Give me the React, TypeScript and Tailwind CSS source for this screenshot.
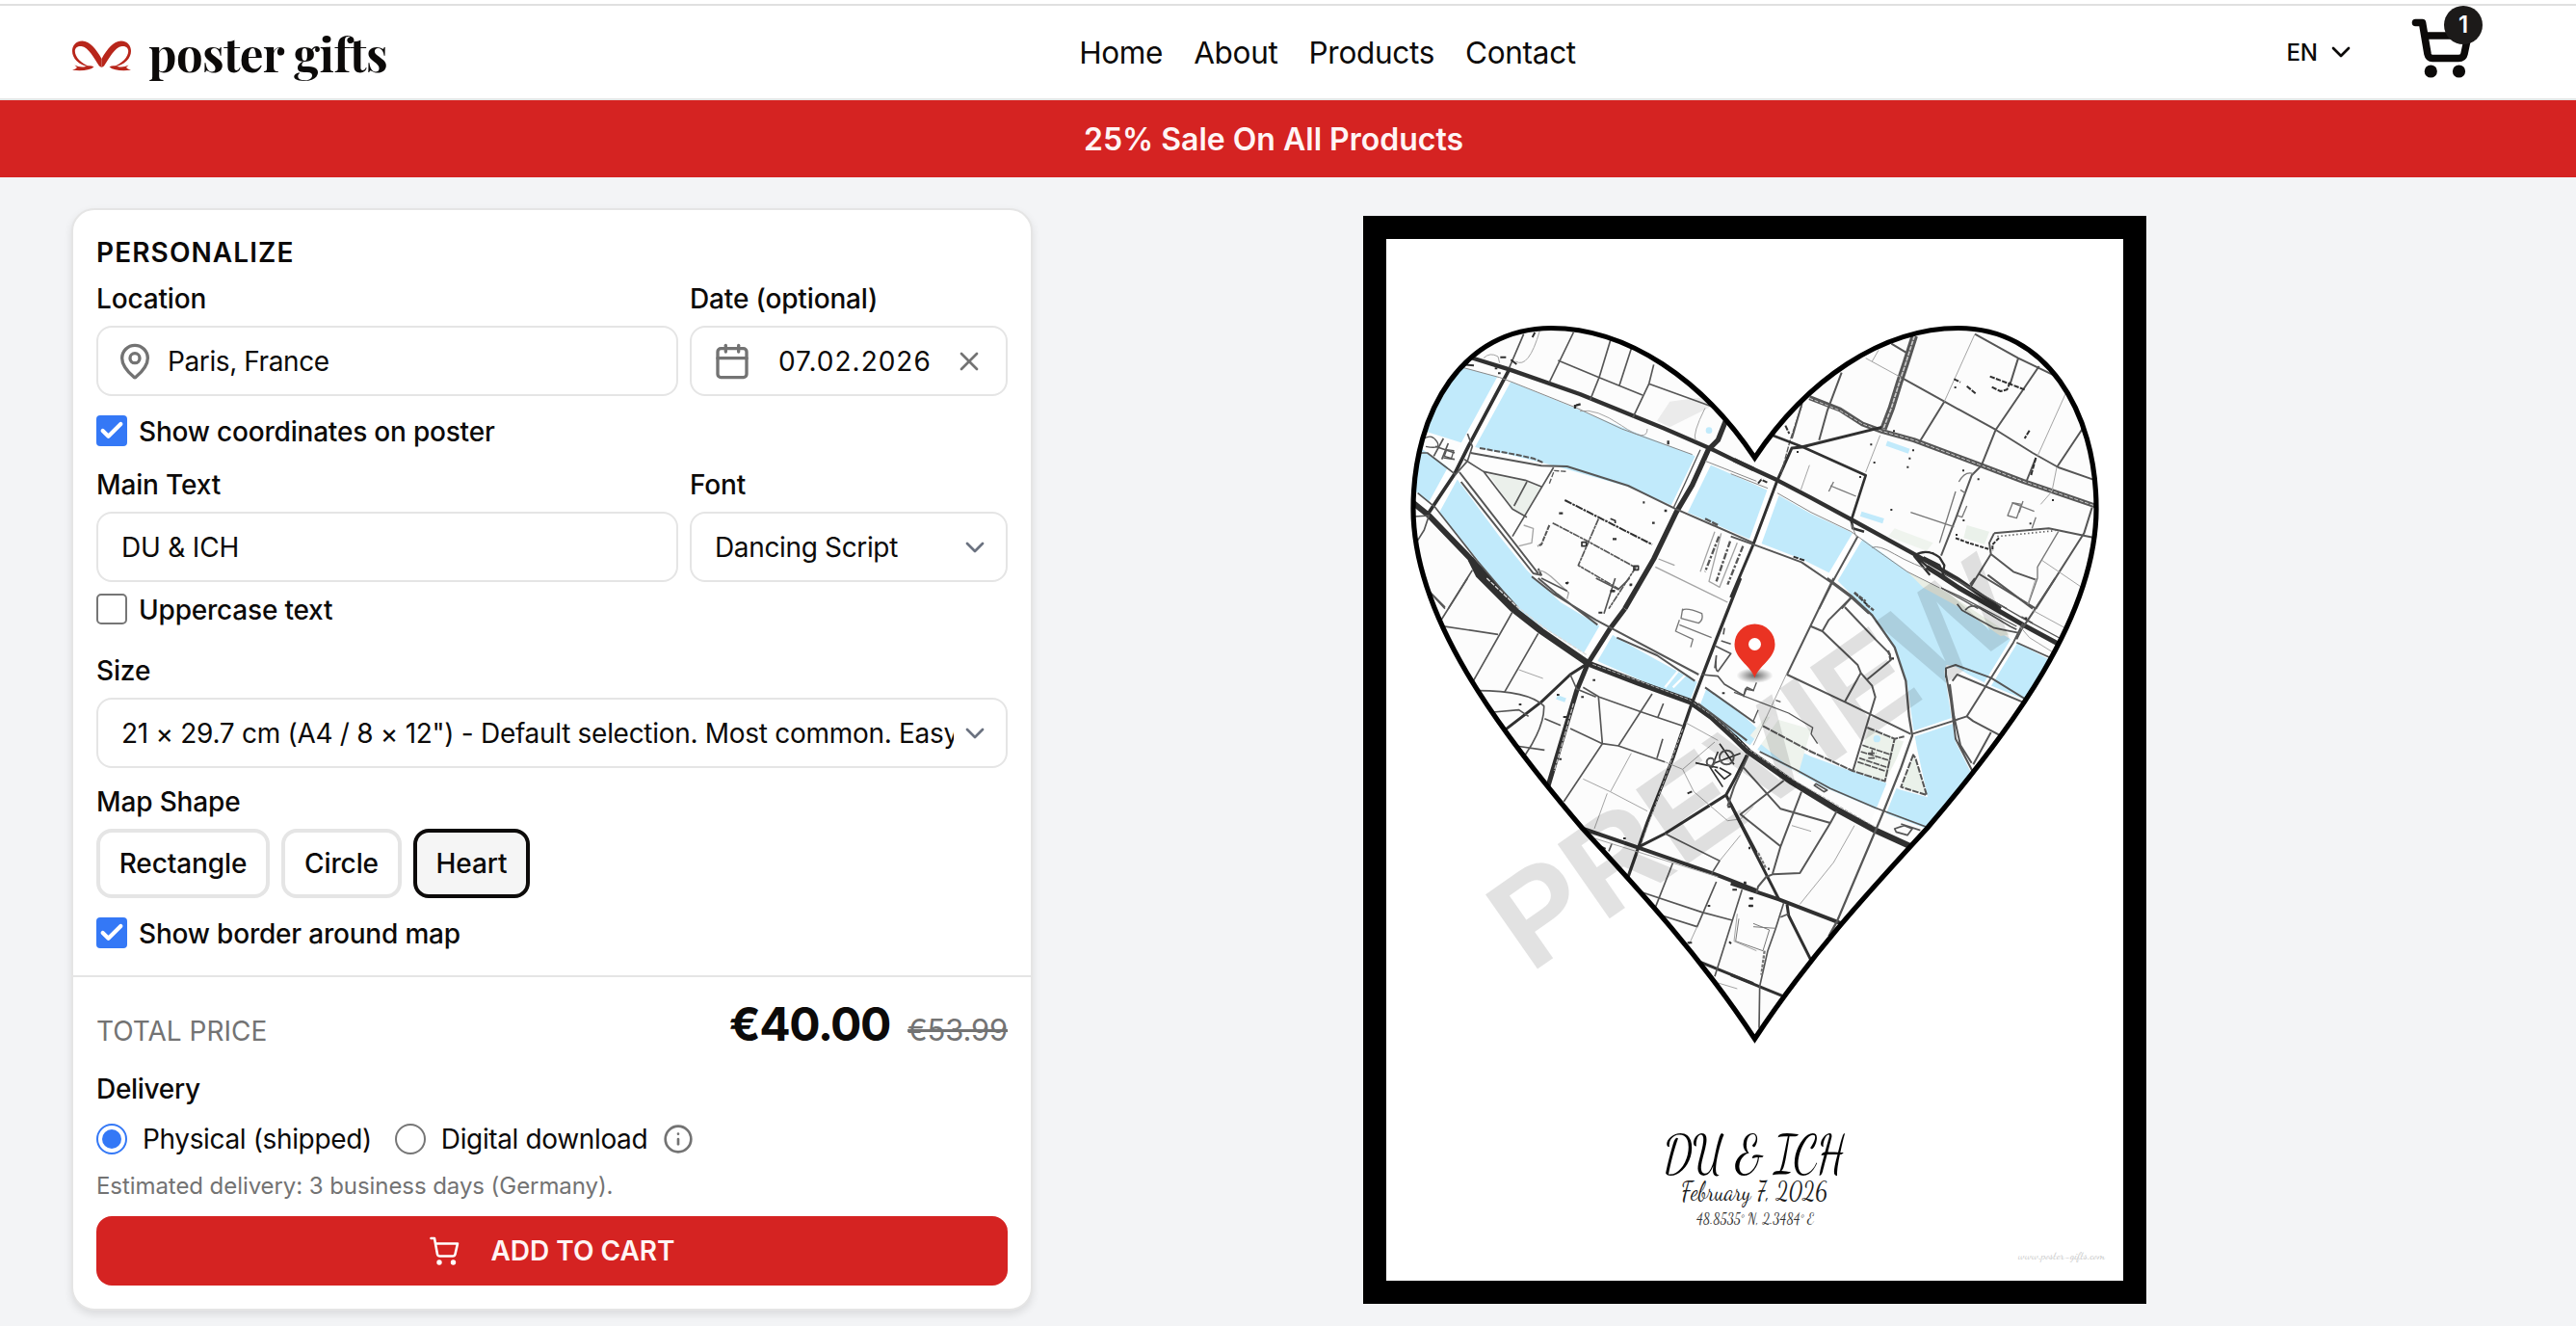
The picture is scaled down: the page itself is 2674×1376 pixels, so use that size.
import React from "react";
import { Calendar, Check, ChevronDown, Info, MapPin, X } from "lucide-react";

const HEART =
  "M1821.5 475 C1768 395 1690 340.5 1610 340.5 C1520 340.5 1467 425 1467 528 C1467 640 1556 758 1643 860 C1700 922 1765 992 1821.5 1078 C1878 992 1943 922 2000 860 C2087 758 2176 640 2176 528 C2176 425 2123 340.5 2033 340.5 C1953 340.5 1875 395 1821.5 475 Z";

type Road = [d: string, width: number, color?: string, dash?: string];

const DARK = "#303030";
const MID = "#565656";
const THIN = "#a4a4a4";

const WATER =
  "340,510 470,545 510,560 850,700 1070,785 1110,810 1335,910 1440,970 1550,1020 1590,1040 1660,1090 1740,1150 1840,1210 1900,1255 2000,1320 2060,1360 2185,1425 2240,1460 2105,1548 1990,1500 1930,1470 1890,1445 1862,1440 1855,1460 1875,1590 1890,1680 1940,1780 1960,1800 1800,1950 1680,1905 1490,1825 1350,1750 1200,1660 1090,1570 1050,1550 780,1430 720,1395 600,1320 510,1260 430,1170 400,1110 270,950 190,885 190,500";
const ISLAND =
  "190,690 245,715 350,748 405,765 500,785 600,810 640,820 870,885 1010,945 1055,965 1240,1045 1410,1110 1500,1155 1550,1205 1630,1290 1700,1390 1740,1500 1757,1630 1770,1700 1803,1852 1715,1828 1670,1806 1570,1772 1440,1725 1290,1655 1200,1570 1110,1510 1080,1490 960,1425 835,1355 775,1315 660,1245 580,1170 555,1145 470,1040 340,865 310,825 225,765 190,740";

const BRIDGES: Road[] = [
  ["M495 530L260 960", 44],
  ["M1115 780L1025 965", 56],
  ["M1330 880L1260 1075", 40],
  ["M1590 1030L1495 1190", 36],
  ["M815 1310L745 1430", 50],
  ["M1105 1490L1070 1580", 34],
  ["M985 1510L1025 1460M1010 1510L1050 1470", 7],
  ["M1330 1600L1245 1720", 26],
  ["M1750 1670L1640 1940", 34],
  ["M1755 1656L1885 1612", 18],
  ["M2100 1320L1990 1500", 24],
];

const NORTH_WEST: Road[] = [
  ["M380 483L500 520L720 597L980 703L1130 768L1200 802L1260 830", 13, DARK],
  ["M500 520L375 755L330 845L250 965", 11, DARK],
  ["M200 935L250 975L380 1110L520 1265", 18, DARK],
  ["M1180 665L1150 740L1120 770L1070 880L1020 965L950 1110L860 1265", 16, DARK],
  ["M1095 770L1045 880L1012 950", 4, MID],
  ["M545 410L500 515M700 405L625 560M652 492L780 545L915 600M815 430L780 545L752 615M880 455L843 570M950 505L935 565L885 670M935 565L1130 635", 5, MID],
  ["M595 400Q560 520 520 495M1110 640Q1070 720 1080 740M720 650Q770 640 850 695T930 705M420 485Q440 465 465 480L470 500", 3, THIN],
  ["M340 510L470 545L510 560L710 640L850 705L1070 785", 3, "#888"],
  ["M1110 805L1270 868", 3, "#888"],
  ["M380 780L600 820L680 822L870 882L1020 955L1260 1060", 6, MID],
  ["M408 765L520 785L575 797L605 810", 6, MID, "18 5"],
  ["M360 800L420 838L550 865L600 885M420 838L510 955L555 980M638 825L510 1040M555 870L515 945", 5, MID],
  ["M625 875L640 835L680 838", 4, MID, "16 5"],
  ["M345 840L590 1155M350 870L575 1155L600 1160L590 1140", 6, MID],
  ["M215 905L270 950L400 1115L480 1210L530 1265", 5, MID],
  ["M215 780L245 780L330 845M265 790L295 735M290 800L310 750M270 760L330 780M295 795L330 800", 5, MID],
  ["M235 735Q260 720 275 745T240 760M305 770L327 773L320 797L298 790Z", 4, MID],
  ["M370 720L385 760L370 805L330 850", 5, MID],
  ["M673 927L945 1065", 6, DARK, "24 3 8 3"],
  ["M635 998L735 1050L890 1135M778 985L715 1130L840 1203M895 1135L810 1265", 5, MID, "22 2 10 2"],
  ["M625 1005L600 1065L588 1070", 6, MID, "16 3"],
  ["M726 1058h14v12h-14zM888 1132h14v12h-14zM815 985l15 6v8", 5, DARK],
  ["M655 968h12M822 1048h12M815 1210h14M678 1188l6-6M875 1190h8M945 998h8M916 934h6M983 960h8M995 742v12M708 632l14-4M705 630v12", 7, DARK],
  ["M545 1005L575 1015L570 1060L530 1070M590 1150Q600 1140 630 1165L685 1215L680 1235", 4, THIN],
  ["M965 1110L1015 1130M955 1135L1180 1245M1140 1025L1095 1150M1160 1030L1122 1180L1155 1198L1210 1060", 4, THIN],
  ["M1153 1040L1110 1150M1188 1055L1145 1180M1228 1070L1180 1190", 7, MID, "20 6 8 5"],
  ["M1110 985L1150 1005", 7, MID, "20 4"],
  ["M205 978L250 975L235 1020L210 1060M240 1200L300 1260M385 1145L310 1265", 5, MID],
  ["M360 505L390 508M472 482h18M455 517h8M465 532h8M580 405l-8 15M505 490l18 14", 6, DARK],
];

const NORTH_EAST: Road[] = [
  ["M0 802L60 830L135 865L240 920L370 990L570 1100L700 1175L830 1265", 13, DARK],
  ["M562 415L535 500L515 560L490 640L465 705", 22, MID],
  ["M562 415L535 500L515 560L490 640L465 705", 5, "#ccc", "14 3"],
  ["M235 608L330 645L400 690L460 712L560 740L760 815L900 868L1125 945", 15, MID],
  ["M235 610L330 648L400 690L460 712L560 740L760 815L900 868L1125 945", 3, "#ccc", "12 5"],
  ["M460 700L210 762L180 765L135 865L60 1065L-10 1230", 9, DARK],
  ["M210 635L175 740L145 850", 4, MID, "18 4"],
  ["M120 725L215 762L410 850L365 990L370 1015L405 1025", 8, DARK],
  ["M335 530L290 650L265 740M212 625L180 735M490 440L540 470M520 545L655 620L815 708L930 780L1010 825L1125 865M655 620L575 750M950 510L815 708L770 820L740 850L690 985L645 1100M750 410L885 485L1010 545M885 485L860 565M1085 705L1005 825M940 795L910 870M1115 950L1090 1030L940 1265", 6, MID],
  ["M410 485L520 545M750 410L655 620M450 460L430 495M455 725L410 840M1035 590L945 790M1005 825L990 900L955 940M235 818L208 895M1085 1200L960 1115", 3, THIN],
  ["M300 882L380 915M310 870L295 900M550 965L685 1010M690 900L640 1060M705 895L720 905M700 870Q720 835 745 845M725 945L710 980L695 975", 4, "#777"],
  ["M810 1030L980 1015L1125 1045M810 1030L795 1060L800 1095L735 1200M800 1095L870 1150L940 1175M760 1155L940 1265", 6, MID],
  ["M820 1040L1000 1022", 5, MID, "4 8"],
  ["M825 1045L805 1065L805 1085M690 1045L730 1060L795 1080", 6, DARK, "12 4"],
  ["M868 935L852 975L880 983L895 940ZM865 935L935 962M900 930L888 965M940 980L928 1015M1010 1025L945 1135L945 1170L915 1255", 4, "#777"],
  ["M685 550L705 560M725 572L752 595M797 542L850 562L905 583M803 575L830 588L850 583L860 560M920 710L905 735M940 795L925 850M160 695L172 720M185 1103L220 1115M375 1215L420 1258M75 875L85 863L105 873", 6, DARK, "16 4"],
  ["M686 576h6M495 712h6M555 772h6M544 797h6M538 824h6M434 810h6M424 754h6M487 957h6M195 777h6M390 855h6M711 835h6M758 862h6M712 990h6M990 927h6M920 1000h6M690 1035h6M725 1060h6M616 1092h6", 6, DARK],
  ["M-10 1040L80 1072L210 1120L305 1185L365 1230L420 1280M385 1040L305 1185L265 1265M365 1230L335 1265", 6, MID],
  ["M560 1100Q600 1075 640 1105L655 1130L650 1160M570 1105L620 1150L660 1170M590 1105L640 1130L655 1165M560 1100L610 1160", 7, DARK],
  ["M135 905L240 965L365 1025L440 1080L540 1150L640 1200M430 1075Q450 1065 500 1095T650 1160", 3, "#888"],
  ["M-10 845L105 890M365 1000L380 1040", 3, "#888"],
  ["M680 1170L760 1215L850 1265M645 1200L760 1265", 4, MID],
];

const SOUTH_WEST: Road[] = [
  ["M380 -60L405 -10L510 95L600 165L745 265", 20, DARK],
  ["M430 0L520 85L610 155L740 238", 4, "#dcdcdc", "14 4"],
  ["M745 265L900 325L1065 385L1130 432L1200 496L1245 540", 19, DARK],
  ["M760 268L910 322L1060 378L1130 426L1200 488", 3, "#b0b0b0", "12 4"],
  ["M860 95L815 155L745 265L710 350L680 450L620 650", 15, DARK],
  ["M700 390L675 480L640 600", 4, "#bbb", "14 4"],
  ["M1220 0L1145 190L1065 400L1010 560L930 760L870 930", 10, DARK],
  ["M1040 470L900 860", 3, "#bbb", "12 5"],
  ["M745 265L690 300L600 385L490 470", 9, DARK],
  ["M730 780L900 838L1150 925L1270 972", 12, DARK],
  ["M900 838L985 795L1175 675L1205 620L1240 550", 9, DARK],
  ["M1175 675L1270 855", 9, DARK],
  ["M1095 1195L1260 1262", 9, DARK],
  ["M570 -5L640 50L770 130L1090 300M590 0L650 50L775 145M835 185L960 240L1078 320M1110 340L1265 450M1088 390L1240 505", 6, MID],
  ["M240 30L300 95M370 0L285 135M285 148L465 175M510 105L385 325M590 172L485 355M400 350Q560 350 608 398Q610 460 550 550M450 417L530 410L560 430M520 522L610 535M610 437L660 458M690 468L790 515L840 522L945 360M790 515L670 695M778 370L790 515M730 340L780 370L915 418L1040 460M980 390L962 435M978 500L960 560M840 522L985 572M690 300L710 345L770 370", 5, MID],
  ["M600 0L680 40M830 0L795 110M770 0L840 35L875 0", 5, MID],
  ["M985 795L1155 880L1130 920M1010 885L955 1025M905 975L1100 1040L1195 1065M1145 945L1085 1085L975 1050M1225 970L1140 1240M820 825L810 850", 5, MID],
  ["M530 285L605 312M880 545L815 665L730 625M815 665L930 725M805 670L765 780M985 572L1040 595L1140 510M1040 595L1075 665L1180 755L1220 750L1260 710M1050 450L1150 505M1220 800L1155 880M1085 1085L1060 1140M1210 1045L1200 1130L1270 1160M750 805L1150 930M1150 1260L1210 1278", 3, THIN],
  ["M1040 100Q1050 90 1100 110Q1105 130 1090 140L1035 125L1040 95M1030 130L1018 165L1072 190L1065 215M1030 145L1130 185", 4, "#777"],
  ["M1080 575L1150 590M1120 580L1165 650M1130 590L1150 540M1140 595L1170 625L1190 610L1155 590M1155 515L1200 580M1220 545L1140 575", 5, DARK],
  ["M1155 558a22 22 0 1 0 44 0a22 22 0 1 0 -44 0M1115 572a12 12 0 1 0 24 0a12 12 0 1 0 -24 0", 6, MID],
  ["M1145 240l-5 40M1160 195l30 10M1170 155l-3 20M1140 210L1190 235L1150 290Q1140 290 1145 240M1100 300L1150 305L1170 330L1230 365M1230 365L1240 340L1262 350", 5, MID],
  ["M675 15h8M815 40h14M875 22h6M778 107h12M760 317h8M724 370h8M648 363h8M530 393h8M668 432h10M655 563h8M1163 358h8M1055 670l14-6M855 810h8M1195 970h14M1230 950h8M1247 997h10M1245 1020h14M1180 712h8M1118 1020h8M1055 1135h14M1185 1132l6 6M785 835l15 8", 6, DARK],
];

const SOUTH_EAST: Road[] = [
  ["M600 -35L640 -10L700 30L900 145L1020 210", 15, DARK],
  ["M655 -12L710 15L900 125L1030 195M645 30L700 55L880 150", 4, MID],
  ["M0 496L45 540L180 635L320 720L440 785L550 835", 19, DARK],
  ["M0 490L45 532L180 625L440 775", 3, "#aaa", "12 4"],
  ["M-10 950L140 1000L335 1075", 12, DARK],
  ["M-10 705L140 1000M165 1015L170 1050L240 1190M-10 1235L150 1300", 9, DARK],
  ["M310 0L165 300L345 385L550 485M240 150L275 165L385 270L395 295L345 385M365 60L295 130L275 165M345 90L440 190L485 235L488 255L415 315M395 295L430 335L440 370L370 600", 6, MID],
  ["M290 0L365 55L430 115L500 215L535 320L545 430L555 490L520 590L460 740L320 1070L295 1115", 7, MID],
  ["M375 45L410 72M412 82L435 100M480 225L488 255", 7, MID, "14 4"],
  ["M660 310L660 280L690 270L800 310L910 378M680 320L695 300L905 388M660 300L675 380L690 500L745 605M672 330L685 430L705 520L740 575", 6, MID],
  ["M900 140L870 200L725 430L745 445L830 490M725 430L680 445L555 485M800 480L745 580", 6, MID],
  ["M1000 0L935 100L895 160L880 190M750 0L735 20M790 -10L930 95", 6, MID],
  ["M940 0L915 80M930 100L1040 160M890 150L920 185L1000 235", 3, THIN],
  ["M695 80L710 100L810 155L885 170M720 100Q735 80 760 90L860 150L880 160M880 200L990 250M895 120L930 140", 5, MID],
  ["M0 355L170 420L245 465L240 485L260 515M70 325L60 350L35 345L30 370M75 410L60 445M130 380L145 385", 4, MID],
  ["M90 460L240 540L370 600L470 632L500 500L530 493M415 465L500 500", 6, MID, "24 3"],
  ["M400 520L490 550M395 540L485 568M390 560L480 590M385 572L470 600M430 535v25M418 545h24M418 560h24", 5, MID, "20 3"],
  ["M558 550L520 650L600 675L565 560Z", 6, MID, "20 4"],
  ["M80 540L190 595L300 655L440 715L600 775M255 640L290 660L280 665L250 645Z", 5, MID],
  ["M500 780L530 770L555 780L540 800L505 790ZM520 765L580 785", 5, MID],
  ["M30 590L145 718L300 762L320 725M300 762L205 918L120 922L100 930L75 960L70 980M210 665L145 835L120 920M155 630L20 735L145 835M45 550L0 650L-20 710", 6, MID],
  ["M375 770L310 885L205 1015M180 770L240 788M165 295L60 520", 3, THIN],
  ["M155 1010L130 1090L105 1160L80 1270L78 1400M145 1055L170 1045", 5, MID],
  ["M60 1075L110 1095L90 1160L5 1130L15 1060M60 1085L130 1090", 3, "#777"],
  ["M75 855L100 905M95 1160L85 1235", 7, "#777", "10 4"],
  ["M50 997h10M47 1020h12M30 948h8M105 905h6M45 840h6M905 125h8M490 250h8", 7, DARK],
];

function Roads({ roads, at }: { roads: Road[]; at: string }) {
  return (
    <g transform={at} fill="none" strokeLinejoin="round">
      {roads.map(([d, width, color = "#fff", dash], i) => (
        <path key={i} d={d} stroke={color} strokeWidth={width} strokeDasharray={dash} />
      ))}
    </g>
  );
}

function PosterArt() {
  return (
    <svg viewBox="1439 248 765 1081" className="block h-full w-full">
      <defs>
        <clipPath id="heart">
          <path d={HEART} />
        </clipPath>
        <radialGradient id="pin-shadow">
          <stop offset="0" stopColor="#000" stopOpacity=".6" />
          <stop offset="1" stopColor="#000" stopOpacity="0" />
        </radialGradient>
      </defs>
      <g clipPath="url(#heart)">
        <rect x="1439" y="300" width="765" height="800" fill="#fcfcfc" />
        <g transform="translate(1400 210) scale(.33333)">
          <polygon points="960,680 1000,620 1110,605 1140,630 1000,700" fill="#ebebeb" />
          <polygon points="1680,1040 1700,1015 1820,1060 1800,1085" fill="#eff4ee" />
          <polygon points="1925,1005 1995,1025 1980,1065 1915,1045" fill="#eaf1ea" />
          <polygon points={WATER} fill="#c1eafb" />
          <polygon points={ISLAND} fill="#fdfdfd" />
          <polygon points="435,845 550,868 598,888 550,978 510,955" fill="#ebf0eb" />
          <polygon points="1300,1600 1440,1640 1400,1780 1250,1660" fill="#eef3ed" />
          <polygon points="1620,1640 1700,1670 1735,1680 1670,1800 1575,1770" fill="#ecf2eb" />
          <polygon points="1760,1725 1800,1845 1722,1820" fill="#eaf1ea" />
          <polygon points="1740,1150 1840,1200 2060,1345 2030,1350 1900,1260 1790,1200" fill="#e9eee4" />
          <path d="M1675 750L1745 775M1595 970L1665 992" stroke="#c1eafb" strokeWidth="16" />
          <circle cx="1122" cy="710" r="10" fill="#c1eafb" />
          <circle cx="1645" cy="1670" r="11" fill="#c1eafb" />
          <path d="M648 1540L675 1550" stroke="#c1eafb" strokeWidth="14" />
        </g>
        <Roads roads={BRIDGES} at="translate(1400 210) scale(.33333)" />
        <Roads roads={NORTH_WEST} at="translate(1400 210) scale(.33333)" />
        <Roads roads={NORTH_EAST} at="translate(1800 210) scale(.33333)" />
        <Roads roads={SOUTH_WEST} at="translate(1400 600) scale(.33333)" />
        <Roads roads={SOUTH_EAST} at="translate(1800 600) scale(.33333)" />
      </g>
      <path d={HEART} fill="none" stroke="#000" strokeWidth="5.2" strokeMiterlimit="10" />
      <ellipse cx="1821.5" cy="701" rx="19" ry="8" fill="url(#pin-shadow)" />
      <path
        d="M1821.5 703.5C1817 690 1800.5 684 1800.5 668.500A21 21 0 0 1 1842.500 668.500C1842.500 684 1826 690 1821.500 703.500Z"
        fill="#ea3323"
      />
      <circle cx="1821.5" cy="668.5" r="6.5" fill="#fff" />
      <text
        x="1819"
        y="837"
        textAnchor="middle"
        transform="rotate(-35 1821.5 788.5)"
        fontFamily="'Liberation Sans',sans-serif"
        fontWeight="700"
        fontSize="137"
        fill="#000"
        fillOpacity=".115"
      >
        PREVIEW
      </text>
      <g fontFamily="'Dancing Script','Liberation Serif',serif" fill="#000">
        <text x="1726.5" y="1215" fontSize="53" textLength="188" lengthAdjust="spacingAndGlyphs">
          DU &amp; ICH
        </text>
        <text x="1745" y="1244.5" fontSize="27" fill="#1c1c1c" textLength="152" lengthAdjust="spacingAndGlyphs">
          February 7, 2026
        </text>
        <text x="1761" y="1270" fontSize="18" fill="#333" textLength="122" lengthAdjust="spacingAndGlyphs">
          48.8535° N, 2.3484° E
        </text>
        <text x="2095" y="1307" fontSize="12" fill="#c9c9c9" textLength="90" lengthAdjust="spacingAndGlyphs">
          www.poster-gifts.com
        </text>
      </g>
    </svg>
  );
}

function Bow() {
  return (
    <svg viewBox="0 0 61 32" className="h-8 w-[61px]" fill="#b8261b">
      {[undefined, "matrix(-1 0 0 1 61 0)"].map((t, i) => (
        <g key={i} transform={t}>
          <path d="M30.500 19C25 9 18 .5 10.500 .5C3 .5 0 6 0 11C0 18 6 26 19 27.500C9 24 2.800 17 2.800 11C2.800 7.500 6 5.500 9.500 6C17 7 23 19 28 26.500L30.500 28Z" />
          <path d="M2.500 25.500Q8 28.500 14 27Q19 25.500 22.500 27.500Q16 32.500 0 30.800Q4 29.500 5 28Z" />
        </g>
      ))}
    </svg>
  );
}

function CartIcon() {
  return (
    <svg viewBox="0 0 64 64" className="block size-16" fill="none" stroke="#0c0a09" strokeWidth="7.6" strokeLinecap="round" strokeLinejoin="round">
      <path d="M5.500 5.500H12.500L18 38Q19 42.500 23 42.500H50Q55 42.500 56 38L60 19H15" />
      <circle cx="21.300" cy="56" r="6.600" fill="#0c0a09" stroke="none" />
      <circle cx="50.500" cy="56" r="6.600" fill="#0c0a09" stroke="none" />
    </svg>
  );
}

function ButtonCart() {
  return (
    <svg viewBox="0 0 32 32" className="size-8" fill="none" stroke="#fff" strokeWidth="2.6" strokeLinecap="round" strokeLinejoin="round">
      <path d="M2.500 3H6L9 19.500Q9.500 21.500 11.500 21.500H25Q27 21.500 27.500 19.500L30 8.500H7" />
      <circle cx="11" cy="28" r="2.700" fill="#fff" stroke="none" />
      <circle cx="25.500" cy="28" r="2.700" fill="#fff" stroke="none" />
    </svg>
  );
}

function Field({ label, children, className = "" }: { label: string; children: React.ReactNode; className?: string }) {
  return (
    <div className={className}>
      <div className="mb-2 h-10 font-medium tracking-[-0.15px]">{label}</div>
      {children}
    </div>
  );
}

const box = "flex h-[73px] items-center rounded-2xl border-2 border-[#e5e5e5] bg-white";

function CheckRow({ label, checked, className = "" }: { label: string; checked?: boolean; className?: string }) {
  return (
    <label className={`flex h-10 items-center gap-3 font-medium ${className}`}>
      {checked ? (
        <span className="flex size-8 items-center justify-center rounded bg-[#3478f6]">
          <Check className="size-7 text-white" strokeWidth={3.6} />
        </span>
      ) : (
        <span className="size-8 rounded-[5px] border-2 border-[#767676] bg-white" />
      )}
      <span className="pt-px tracking-[-0.2px]">{label}</span>
    </label>
  );
}

export default function App() {
  return (
    <div className="flex h-[1376px] w-[2674px] flex-col overflow-hidden bg-[#f3f4f6] font-['Inter',sans-serif] text-[28px] leading-10 text-[#0c0a09]">
      <header className="h-[104px] shrink-0 border-b-2 border-[#e5e5e5] bg-white pt-1">
        <div className="grid h-[98px] grid-cols-[1fr_auto_1fr] items-center border-t-2 border-[#e0e0e0] pr-24 pl-[75px]">
          <a className="flex items-center gap-[18px]">
            <span className="pt-2">
              <Bow />
            </span>
            <span className="pt-0.5 font-['Playfair_Display','Liberation_Serif',serif] text-[49px] leading-[60px] font-bold tracking-[-0.5px]">poster gifts</span>
          </a>
          <nav className="flex gap-8 pt-0.5 pl-[103px] text-[31.5px] tracking-[-0.3px]">
            <a>Home</a>
            <a>About</a>
            <a>Products</a>
            <a>Contact</a>
          </nav>
          <div className="flex items-center justify-end">
            <span className="pt-0.5 text-2xl font-medium">EN</span>
            <ChevronDown className="ml-2 size-8" strokeWidth={2} />
            <span className="relative -mt-2 ml-14 mr-3">
              <CartIcon />
              <span className="absolute -top-3 left-[35px] flex size-10 items-center justify-center rounded-full bg-[#1c1a19] text-2xl font-semibold text-white">1</span>
            </span>
          </div>
        </div>
      </header>

      <div className="flex h-20 shrink-0 items-center justify-center bg-[#d52322] pt-0.5 pr-[30px] text-[32px] font-semibold text-[#fff5f5]">25% Sale On All Products</div>

      <main className="flex items-start pt-8 pl-[74px]">
        <section className="h-[1144px] w-[998px] rounded-3xl border-2 border-[#e5e5e5] bg-white pt-6 shadow-[0_4px_8px_rgba(0,0,0,0.1)]">
          <div className="flex h-[770px] flex-col px-6">
            <h2 className="mb-2 h-10 font-semibold tracking-[1.1px]">PERSONALIZE</h2>
            <div className="grid grid-cols-[604px_330px] gap-3">
              <Field label="Location">
                <div className={`${box} pl-[18px]`}>
                  <MapPin className="size-10 text-[#737373]" strokeWidth={2} />
                  <span className="ml-3.5 tracking-[-0.4px]">Paris, France</span>
                </div>
              </Field>
              <Field label="Date (optional)">
                <div className={`${box} pr-[22px] pl-[22px]`}>
                  <Calendar className="size-10 text-[#737373]" strokeWidth={2} />
                  <span className="ml-7 tracking-[1px]">07.02.2026</span>
                  <X className="ml-auto size-8 text-[#737373]" strokeWidth={2} />
                </div>
              </Field>
            </div>
            <CheckRow label="Show coordinates on poster" checked className="mt-4" />
            <div className="mt-4 grid grid-cols-[604px_330px] gap-3">
              <Field label="Main Text">
                <div className={`${box} px-6 tracking-[-0.2px]`}>DU &amp; ICH</div>
              </Field>
              <Field label="Font">
                <div className={`${box} justify-between pr-4 pl-6`}>
                  <span className="tracking-[-0.35px]">Dancing Script</span>
                  <ChevronDown className="size-8 text-[#6b7280]" strokeWidth={2} />
                </div>
              </Field>
            </div>
            <CheckRow label="Uppercase text" className="mt-2" />
            <Field label="Size" className="mt-6">
              <div className={`${box} pr-4 pl-6`}>
                <span className="w-[864px] overflow-hidden tracking-[-0.29px] whitespace-nowrap">21 × 29.7 cm (A4 / 8 × 12") - Default selection. Most common. Easy to frame</span>
                <ChevronDown className="ml-auto size-8 shrink-0 text-[#6b7280]" strokeWidth={2} />
              </div>
            </Field>
            <Field label="Map Shape" className="mt-[15px]">
              <div className="flex gap-3 font-medium tracking-[-0.1px]">
                <span className="flex h-[72px] w-[180px] items-center justify-center rounded-2xl border-4 border-[#e5e5e5]">Rectangle</span>
                <span className="flex h-[72px] w-[125px] items-center justify-center rounded-2xl border-4 border-[#e5e5e5]">Circle</span>
                <span className="flex h-[72px] w-[121px] items-center justify-center rounded-2xl border-4 border-[#0c0a09] bg-[#f5f5f5]">Heart</span>
              </div>
            </Field>
            <CheckRow label="Show border around map" checked className="mt-4" />
          </div>

          <div className="flex flex-col border-t-2 border-[#e5e5e5] px-6 pt-[17px]">
            <div className="flex h-16 items-baseline leading-[64px]">
              <span className="text-[#737373]">TOTAL PRICE</span>
              <span className="ml-auto text-5xl leading-[64px] font-bold tracking-[-1.4px]">€40.00</span>
              <span className="ml-[18px] text-[31px] tracking-[-0.2px] text-[#737373] line-through">€53.99</span>
            </div>
            <div className="mt-[15px] h-10 font-medium tracking-[-0.3px]">Delivery</div>
            <div className="mt-3 flex h-10 items-center tracking-[-0.36px]">
              <span className="flex size-8 items-center justify-center rounded-full border-2 border-[#3478f6]">
                <span className="size-5 rounded-full bg-[#3478f6]" />
              </span>
              <span className="ml-4">Physical (shipped)</span>
              <span className="ml-6 size-8 rounded-full border-2 border-[#767676]" />
              <span className="ml-4">Digital download</span>
              <Info className="ml-4 size-8 text-[#737373]" strokeWidth={2} />
            </div>
            <div className="mt-[13px] h-8 text-2xl leading-8 tracking-[-0.07px] text-[#737373]">Estimated delivery: 3 business days (Germany).</div>
            <button className="mt-[15px] flex h-[72px] items-center justify-center rounded-2xl bg-[#d52322] font-semibold text-[#fff5f5]">
              <ButtonCart />
              <span className="ml-8">ADD TO CART</span>
            </button>
          </div>
        </section>

        <section className="mt-2 ml-[343px] h-[1129px] w-[813px] border-[24px] border-black bg-white">
          <PosterArt />
        </section>
      </main>
    </div>
  );
}
